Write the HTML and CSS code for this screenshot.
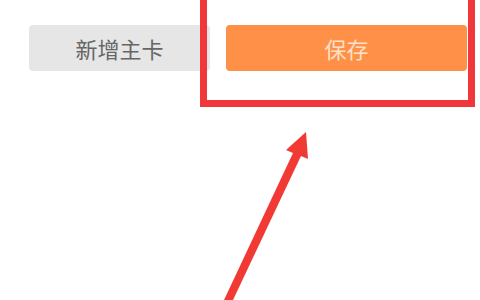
FILE: index.html
```html
<!DOCTYPE html>
<html lang="zh-CN">
<head>
    <meta charset="UTF-8">
    <meta name="viewport" content="width=device-width, initial-scale=1.0">
    <title>保存</title>
    <link rel="stylesheet" href="styles.css">
</head>
<body>
    <div class="action-bar">
        <button class="button button-grey">新增主卡</button>
        <button class="button button-orange">保存</button>
    </div>
    <!-- annotation overlay -->
    <div class="mark-box"></div>
    <svg class="mark-arrow" width="480" height="300" viewBox="0 0 480 300">
        <polygon points="224,300 233,300 301,156 308,159 306,132 286,150 293,153" fill="#f23a35"/>
    </svg>
</body>
</html>
```

FILE: styles.css
```css
body {
    margin: 0;
    background-color: #fff;
    font-family: "Noto Sans CJK SC", "Noto Sans", sans-serif;
    width: 480px;
    height: 300px;
    overflow: hidden;
    position: relative;
}
.action-bar {
    display: flex;
    gap: 16px;
    padding: 25px 0 0 29px;
}
.button {
    height: 46px;
    border: none;
    border-radius: 4px;
    font-family: inherit;
    font-size: 22px;
    font-weight: 400;
    padding: 0;
}
.button-grey {
    width: 181px;
    background-color: #e6e6e6;
    color: #666;
}
.button-orange {
    width: 241px;
    background-color: #ff9048;
    color: #fde0c8;
}
.mark-box {
    position: absolute;
    left: 200px;
    top: -8px;
    width: 261px;
    height: 101px;
    border: 7px solid #f0383a;
}
.mark-arrow {
    position: absolute;
    left: 0;
    top: 0;
}
```
